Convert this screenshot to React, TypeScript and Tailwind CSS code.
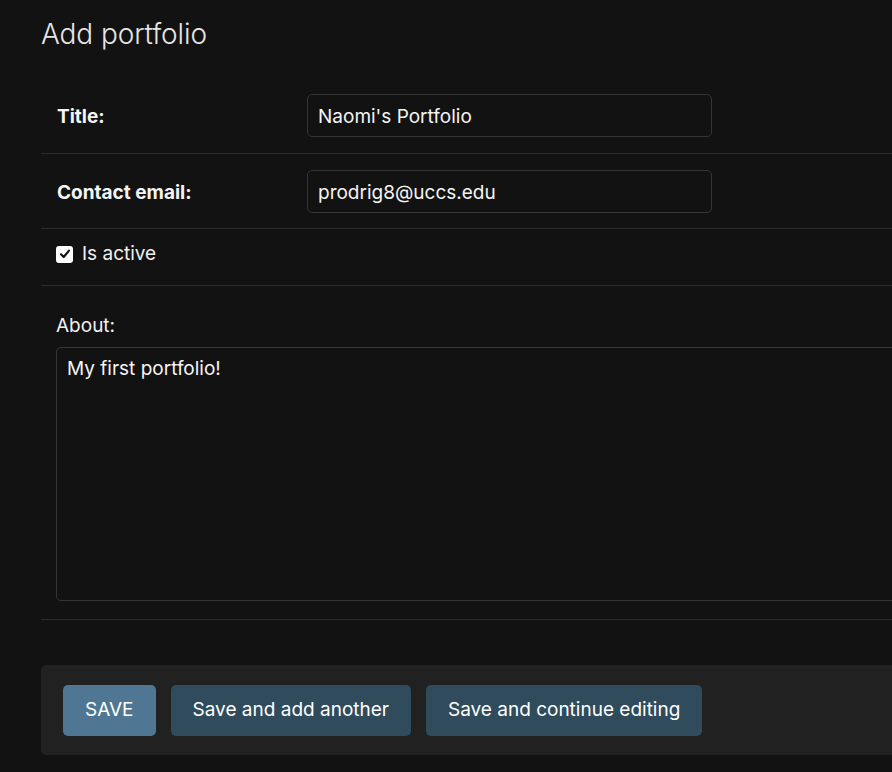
import React from "react";

export default function App() {
  return (
    <div
      className="min-h-[772px] w-full overflow-hidden bg-[#121212] text-[#f5f5f5]"
      style={{ fontFamily: "Inter, 'Noto Sans', sans-serif" }}
    >
      <div className="w-[1000px] pl-[41px] pt-[16px]">
        <h1 className="text-[28px] font-light leading-[36px] text-[#e6e6e6] tracking-[-0.1px]">Add portfolio</h1>

        <div className="mt-[25px]">
          <div className="flex items-center border-b border-[#2b2b2b] px-[16px] pt-[17px] pb-[16px]">
            <label className="w-[250px] pt-[3px] text-[19px] font-bold text-[#f5f5f5]">Title:</label>
            <div className="flex h-[43px] w-[405px] items-center rounded-[5px] border border-[#353535] px-[10px] pt-[3px] text-[19px] text-[#f5f5f5]">
              Naomi's Portfolio
            </div>
          </div>

          <div className="flex items-center border-b border-[#2b2b2b] px-[16px] pt-[16px] pb-[15px]">
            <label className="w-[250px] pt-[3px] text-[19px] font-bold text-[#f5f5f5]">Contact email:</label>
            <div className="flex h-[43px] w-[405px] items-center rounded-[5px] border border-[#353535] px-[10px] pt-[3px] text-[19px] text-[#f5f5f5]">
              prodrig8@uccs.edu
            </div>
          </div>

          <div className="flex h-[57px] items-center gap-[9px] border-b border-[#2b2b2b] px-[15px] pb-[6px]">
            <div className="flex h-[17px] w-[17px] items-center justify-center rounded-[3px] bg-white">
              <svg width="12" height="12" viewBox="0 0 12 12">
                <path d="M2 6.3 L4.7 9 L10 2.6" fill="none" stroke="#121212" strokeWidth="2.2" strokeLinecap="round" strokeLinejoin="round" />
              </svg>
            </div>
            <span className="pt-[1px] text-[19px] text-[#f0f0f0]">Is active</span>
          </div>

          <div className="border-b border-[#2b2b2b] px-[15px] pt-[27px] pb-[18px]">
            <div className="text-[19px] leading-[26px] text-[#f0f0f0]">About:</div>
            <div className="mt-[8px] h-[254px] w-[900px] rounded-[5px] border border-[#353535] px-[10px] pt-[7px] text-[19px] text-[#f5f5f5]">
              My first portfolio!
            </div>
          </div>
        </div>

        <div className="mt-[45px] flex h-[90px] items-center gap-[15px] rounded-[5px] bg-[#212121] px-[22px]">
          <button className="h-[51px] rounded-[5px] bg-[#4f7793] px-[22px] pt-[1px] text-[19px] text-white">SAVE</button>
          <button className="h-[51px] rounded-[5px] bg-[#2f4b5c] px-[22px] pt-[1px] text-[19px] text-white">Save and add another</button>
          <button className="h-[51px] rounded-[5px] bg-[#2f4b5c] px-[22px] pt-[1px] text-[19px] text-white">Save and continue editing</button>
        </div>
      </div>
    </div>
  );
}
